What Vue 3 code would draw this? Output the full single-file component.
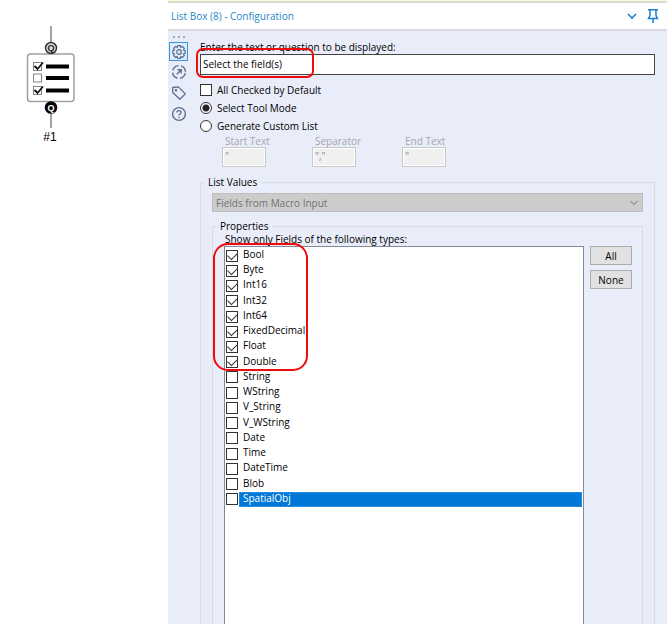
<script setup>
import { ref } from 'vue'

const question = ref('Select the field(s)')
const allChecked = ref(false)
const mode = ref('tool')
const source = ref('macro')
const selected = ref('SpatialObj')

const custom = [
  { id: 'start', label: 'Start Text', value: '"' },
  { id: 'separator', label: 'Separator', value: '","' },
  { id: 'end', label: 'End Text', value: '"' },
]

const numeric = ['Bool', 'Byte', 'Int16', 'Int32', 'Int64', 'FixedDecimal', 'Float', 'Double']
const other = ['String', 'WString', 'V_String', 'V_WString', 'Date', 'Time', 'DateTime', 'Blob', 'SpatialObj']
const types = ref([
  ...numeric.map((name) => ({ name, on: true })),
  ...other.map((name) => ({ name, on: false })),
])

function setAll(on) {
  types.value.forEach((t) => { t.on = on })
}
</script>

<template>
  <div class="page">
    <div class="canvas">
      <svg class="tool" width="52" height="104" viewBox="0 0 52 104" aria-hidden="true">
        <path d="M26 1v16M26 89v14" stroke="#a3a3a3" stroke-width="2" />
        <rect x="2.500" y="29" width="46.500" height="47.500" rx="3" fill="#fff" stroke="#a0a0a0" stroke-width="1.500" />
        <g fill="#fff" stroke="#858585">
          <rect x="8.500" y="37.500" width="8" height="8" />
          <rect x="8.500" y="49" width="8" height="8" />
          <rect x="8.500" y="61.500" width="8" height="8" />
        </g>
        <path d="M9.500 41l3 3 5.500-6.500M9.500 65l3 3 5.500-6.500" fill="none" stroke="#111" stroke-width="1.800" />
        <path d="M21 41.500h23M21 53h23M21 65.500h23" stroke="#000" stroke-width="4" />
        <circle cx="26" cy="23" r="5.500" fill="#ddd" stroke="#333" stroke-width="1.500" />
        <circle cx="26" cy="82.500" r="6.300" fill="#050505" />
        <text x="26" y="26" class="q">Q</text>
        <text x="26" y="85.500" class="q q-light">Q</text>
      </svg>
      <span class="tool-name">#1</span>
    </div>

    <main class="panel">
      <header class="bar">
        <h1>List Box (8) - Configuration</h1>
        <button type="button" class="bare" aria-label="Window options">
          <svg width="12" height="14" viewBox="0 0 12 14"><path d="M2 5l4 4 4-4" fill="none" stroke="#1b7fd4" stroke-width="1.600" /></svg>
        </button>
        <button type="button" class="bare" aria-label="Pin">
          <svg width="12" height="16" viewBox="0 0 12 16"><path d="M1 1.700h10M3 2v5.500L1.500 10.500h9L9 7.500V2M6 10.500V15" fill="none" stroke="#1b7fd4" stroke-width="1.500" /></svg>
        </button>
      </header>

      <div class="body">
        <nav class="rail" aria-label="Sections">
          <span class="dots"><i></i><i></i><i></i></span>
          <button type="button" class="bare active" aria-label="Configuration">
            <svg width="16" height="16" viewBox="0 0 16 16"><g fill="none" stroke="#5c6f8f" stroke-width="1.200"><path d="M6.700 1.700h2.600l.5 1.600 1.600-.8 1.900 1.900-.8 1.600 1.700.6v2.700l-1.700.6.8 1.600-1.900 1.900-1.600-.8-.5 1.700H6.700l-.6-1.700-1.600.8-1.900-1.900.8-1.600-1.600-.6V6.600l1.600-.6-.8-1.600 1.900-1.900 1.600.8z" /><circle cx="8" cy="8" r="2.300" /></g></svg>
          </button>
          <button type="button" class="bare" aria-label="Navigation">
            <svg width="16" height="16" viewBox="0 0 16 16"><g fill="none" stroke="#5c6f8f" stroke-width="1.400"><circle cx="8" cy="8" r="6.400" stroke-dasharray="7.500 2.553" stroke-dashoffset="-1.300" /><path d="M5.800 10.200l4-4M6.500 5.800h3.700v3.700" /></g></svg>
          </button>
          <button type="button" class="bare" aria-label="Annotation">
            <svg width="16" height="16" viewBox="0 0 16 16"><g fill="none" stroke="#5c6f8f" stroke-width="1.300"><path d="M1.700 2.500l5.600-.6 7 7-5.500 5.300-7-6.700z" stroke-linejoin="round" /><circle cx="5" cy="5.300" r=".6" /></g></svg>
          </button>
          <button type="button" class="bare" aria-label="Help">
            <svg width="16" height="16" viewBox="0 0 16 16"><g fill="none" stroke="#5c6f8f" stroke-width="1.400"><circle cx="8" cy="8" r="6.400" /><path d="M5.900 6.600c0-2.700 4.200-2.700 4.200 0 0 1.500-2.100 1.400-2.100 3M8 10.700v1.400" /></g></svg>
          </button>
        </nav>

        <form class="form" @submit.prevent>
          <label class="caption" for="question">Enter the text or question to be displayed:</label>
          <div class="question">
            <input id="question" v-model="question" type="text" />
            <span class="mark mark-question"></span>
          </div>

          <div class="options">
            <label><input v-model="allChecked" type="checkbox" class="check" />All Checked by Default</label>
            <label><input v-model="mode" type="radio" value="tool" class="radio" />Select Tool Mode</label>
            <label><input v-model="mode" type="radio" value="custom" class="radio" />Generate Custom List</label>
          </div>

          <div class="custom">
            <div v-for="c in custom" :key="c.id" class="custom-field">
              <label :for="c.id">{{ c.label }}</label>
              <input :id="c.id" type="text" :value="c.value" disabled />
            </div>
          </div>

          <fieldset class="group">
            <legend>List Values</legend>
            <div class="picker">
              <select v-model="source" aria-label="List values source" disabled>
                <option value="macro">Fields from Macro Input</option>
              </select>
              <svg width="10" height="8" viewBox="0 0 10 8"><path d="M1.500 2l3.500 3.500L8.500 2" fill="none" stroke="#999" stroke-width="1.200" /></svg>
            </div>

            <fieldset class="group inner">
              <legend>Properties</legend>
              <div class="caption list-caption">Show only Fields of the following types:</div>
              <div class="columns">
                <div class="list">
                  <div class="rows">
                    <label v-for="t in types" :key="t.name" class="row">
                      <input v-model="t.on" type="checkbox" class="check" />
                      <span :class="{ selected: t.name === selected }">{{ t.name }}</span>
                    </label>
                  </div>
                  <span class="mark mark-types"></span>
                </div>
                <div class="actions">
                  <button type="button" @click="setAll(true)">All</button>
                  <button type="button" @click="setAll(false)">None</button>
                </div>
              </div>
            </fieldset>
          </fieldset>
        </form>
      </div>
    </main>
  </div>
</template>

<style>
body { margin: 0; background: #fff; }
</style>

<style scoped>
* { box-sizing: border-box; }
.page {
  display: flex;
  min-height: 100vh;
  font: 10px/14px "Open Sans", "Noto Sans", sans-serif;
  color: #000;
}
input, select, button { font: inherit; color: inherit; margin: 0; }
svg { display: block; }

.canvas {
  flex: 0 0 168px;
  display: flex;
  flex-direction: column;
  align-items: flex-start;
  padding: 25px 0 0 25px;
}
.tool-name { width: 50px; text-align: center; font: 12px/16px "Liberation Sans", Arial, sans-serif; }
.q { font: bold 9px "Liberation Sans", Arial, sans-serif; text-anchor: middle; fill: #222; }
.q-light { fill: #fff; }

.panel {
  flex: 1;
  min-width: 0;
  display: flex;
  flex-direction: column;
  background: #e9edf9;
  border-top: 1px solid #fbfbd6;
}
.bar {
  display: flex;
  align-items: center;
  gap: 9px;
  height: 30px;
  padding: 0 8px 0 3px;
  background: #fff;
  border-top: 2px solid #d9dbd6;
  border-bottom: 2px solid #d7dbdf;
}
.bar h1 { flex: 1; margin: 0; font-size: 10px; font-weight: 400; color: #2388c9; }
.bare {
  display: flex;
  align-items: center;
  justify-content: center;
  padding: 0;
  border: 0;
  background: none;
}

.body { flex: 1; display: flex; }
.rail { flex: 0 0 21px; display: flex; flex-direction: column; align-items: center; }
.rail .bare { width: 20px; height: 21px; }
.rail .active { height: 19px; width: 19px; border: 1px solid #3796de; background: #dfebf9; }
.dots { display: flex; gap: 3px; padding: 5px 0 4px; }
.dots i { width: 2px; height: 2px; background: #a4a9b2; }

.form { flex: 1; min-width: 0; display: flex; flex-direction: column; padding: 10px 12px 0 11px; }
.caption { line-height: 13px; white-space: nowrap; }
.list-caption { padding-left: 1px; }
.question { position: relative; }
.question input {
  display: block;
  width: 100%;
  height: 21px;
  padding: 0 2px 2px;
  border: 1px solid #444;
  background: #fff;
}
.mark { position: absolute; border: 2px solid #f00b0b; pointer-events: none; }
.mark-question { left: -4px; top: -6px; width: 118px; height: 30px; border-radius: 7px; }
.mark-types { left: -12px; top: -4px; width: 95px; height: 128px; border-radius: 15px; }

.options { padding-top: 6px; }
.options label { display: flex; align-items: center; gap: 5px; height: 18px; }
.check, .radio {
  appearance: none;
  flex: none;
  position: relative;
  width: 12px;
  height: 12px;
  border: 1px solid #333;
  background: #fff;
}
.radio { border-radius: 50%; }
.radio:checked { background: radial-gradient(circle, #222 3px, #fff 4px); }
.check:checked::after {
  content: "";
  position: absolute;
  left: 1px;
  top: 1px;
  width: 8px;
  height: 5px;
  border: solid #333;
  border-width: 0 0 1px 1px;
  transform: rotate(-45deg);
}

.custom { display: flex; gap: 46px; padding: 0 0 8px 22px; color: #a5a7ad; }
.custom-field { width: 44px; }
.custom-field label { display: block; line-height: 12px; padding-left: 3px; white-space: nowrap; }
.custom-field input {
  display: block;
  width: 100%;
  height: 20px;
  padding: 0 2px 2px;
  border: 1px solid #c8c8c8;
  box-shadow: inset 0 0 0 1px #fff;
  background: #f0f0f0;
  color: #8a8c92;
}

.group {
  flex: 1;
  display: flex;
  flex-direction: column;
  min-width: 0;
  margin: 0;
  padding: 4px 11px 0 11px;
  border: 1px solid #d9dbe0;
  border-bottom: 0;
}
.group legend { padding: 0 4px; margin-left: -8px; line-height: 14px; }
.picker { display: flex; align-items: center; background: #ccc; border: 1px solid #bebebe; padding-right: 3px; }
.picker select {
  appearance: none;
  flex: 1;
  height: 17px;
  padding: 0 3px;
  border: 0;
  background: none;
  color: #727272;
  opacity: 1;
}
.inner { margin-top: 7px; padding: 0 10px 0 11px; }
.columns { flex: 1; display: flex; gap: 6px; }
.list {
  flex: 1;
  position: relative;
  padding: 1px 1px 0 1px;
  border: 1px solid #858b96;
  border-bottom: 0;
  background: #fff;
}
.rows { display: grid; grid-template-rows: repeat(17, 1fr); height: 259px; }
.row { display: flex; align-items: center; gap: 1px; min-height: 0; }
.row span { flex: 1; align-self: stretch; padding-left: 4px; line-height: 13px; }
.row .selected { background: #0078d7; color: #fff; outline: 1px dotted #4a9fe4; outline-offset: -1px; }
.actions { display: flex; flex-direction: column; gap: 5px; width: 42px; }
.actions button { height: 19px; padding: 0; border: 1px solid #adadad; background: #e1e1e1; }
</style>
